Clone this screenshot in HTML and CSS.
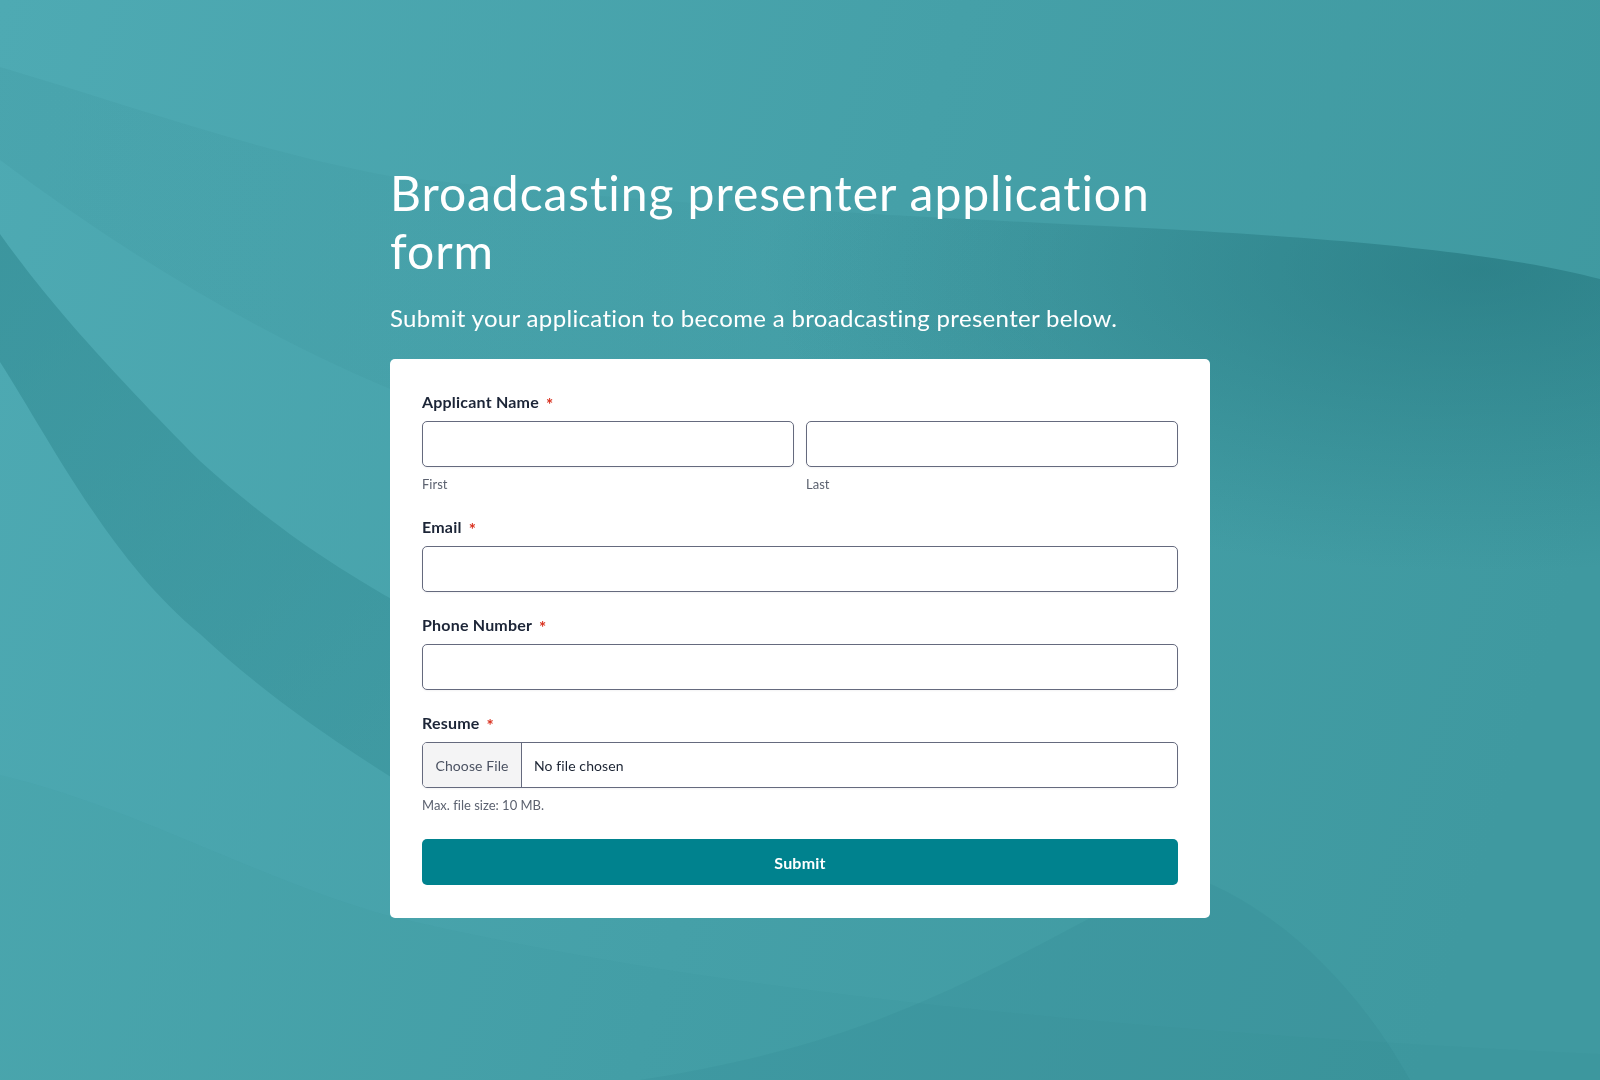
FILE: index.html
```html
<!DOCTYPE html>
<html lang="en">
<head>
<meta charset="utf-8">
<title>Broadcasting presenter application form</title>
<link rel="stylesheet" href="styles.css">
</head>
<body>
<svg class="bg" viewBox="0 0 1600 1080" preserveAspectRatio="none" aria-hidden="true">
  <defs>
    <linearGradient id="g0" x1="0" y1="0" x2="1600" y2="500" gradientUnits="userSpaceOnUse">
      <stop offset="0" stop-color="#4eaab3"/>
      <stop offset="0.55" stop-color="#45a0a8"/>
      <stop offset="1" stop-color="#3f99a0"/>
    </linearGradient>
    <linearGradient id="gAh" x1="0" y1="0" x2="1100" y2="0" gradientUnits="userSpaceOnUse">
      <stop offset="0" stop-color="#1b6a72" stop-opacity="0.08"/>
      <stop offset="0.6" stop-color="#1b6a72" stop-opacity="0.05"/>
      <stop offset="1" stop-color="#1b6a72" stop-opacity="0"/>
    </linearGradient>
    <radialGradient id="gA" cx="1480" cy="270" r="720" gradientUnits="userSpaceOnUse" gradientTransform="translate(1480 270) scale(1 0.42) translate(-1480 -270)">
      <stop offset="0" stop-color="#1b6a72" stop-opacity="0.5"/>
      <stop offset="1" stop-color="#1b6a72" stop-opacity="0"/>
    </radialGradient>
    <linearGradient id="gB" x1="0" y1="250" x2="400" y2="780" gradientUnits="userSpaceOnUse">
      <stop offset="0" stop-color="#2b838b" stop-opacity="0.5"/>
      <stop offset="1" stop-color="#2b838b" stop-opacity="0.3"/>
    </linearGradient>
  </defs>
  <rect x="0" y="0" width="1600" height="1080" fill="url(#g0)"/>
  <path d="M0,67 C130,105 250,150 390,176 C650,205 950,218 1200,231 C1400,243 1520,258 1600,279 L1600,820 C1200,700 800,560 390,389 C250,330 120,250 0,160 Z" fill="url(#gAh)"/>
  <path d="M0,67 C130,105 250,150 390,176 C650,205 950,218 1200,231 C1400,243 1520,258 1600,279 L1600,820 C1200,700 800,560 390,389 C250,330 120,250 0,160 Z" fill="url(#gA)"/>
  <path d="M0,234 C40,290 90,350 200,461 C260,515 320,560 420,615 L420,795 C330,740 260,690 200,634 C110,560 50,440 0,362 Z" fill="url(#gB)"/>
  <path d="M0,775 C130,805 260,880 390,916 C700,990 1100,1030 1600,1054 L1600,1080 L0,1080 Z" fill="#1b6a72" fill-opacity="0.035"/>
  <path d="M1180,872 C1280,905 1360,990 1410,1080 L640,1080 C900,1040 1000,960 1180,872 Z" fill="#1b6a72" fill-opacity="0.08"/>
</svg>

<main class="page">
  <h1 class="title">Broadcasting presenter application form</h1>
  <p class="subtitle">Submit your application to become a broadcasting presenter below.</p>

  <form class="card">
    <div class="field">
      <div class="label">Applicant Name <span class="req">*</span></div>
      <div class="name-row">
        <div class="name-col">
          <input class="input" type="text" aria-label="First">
          <div class="sub">First</div>
        </div>
        <div class="name-col">
          <input class="input" type="text" aria-label="Last">
          <div class="sub">Last</div>
        </div>
      </div>
    </div>

    <div class="field">
      <div class="label">Email <span class="req">*</span></div>
      <input class="input" type="text" aria-label="Email">
    </div>

    <div class="field">
      <div class="label">Phone Number <span class="req">*</span></div>
      <input class="input" type="text" aria-label="Phone Number">
    </div>

    <div class="field">
      <div class="label">Resume <span class="req">*</span></div>
      <div class="file">
        <span class="file-btn">Choose File</span>
        <span class="file-name">No file chosen</span>
      </div>
      <div class="sub">Max. file size: 10 MB.</div>
    </div>

    <button class="submit" type="button">Submit</button>
  </form>
</main>
</body>
</html>
```

FILE: styles.css
```css
* {
  box-sizing: border-box;
}

html, body {
  margin: 0;
  padding: 0;
  height: 100%;
}

body {
  font-family: Lato, "Open Sans", "Liberation Sans", sans-serif;
  font-variant-ligatures: none;
  font-feature-settings: "liga" 0, "clig" 0;
  background: #45a0a8;
  overflow: hidden;
}

.bg {
  position: fixed;
  left: 0;
  top: 0;
  width: 100%;
  height: 100%;
  z-index: 0;
  display: block;
}

.page {
  position: relative;
  z-index: 1;
  width: 820px;
  margin: 0 auto;
  padding-top: 164px;
}

.title {
  margin: 0;
  color: #ffffff;
  font-size: 48px;
  line-height: 58px;
  font-weight: 400;
  letter-spacing: 0.95px;
}

.subtitle {
  margin: 22px 0 0;
  color: #ffffff;
  font-size: 24px;
  line-height: 32px;
  font-weight: 400;
  letter-spacing: 0.33px;
}

.card {
  margin-top: 25px;
  background: #ffffff;
  border-radius: 5px;
  padding: 32px 32px 33px;
  display: flex;
  flex-direction: column;
  gap: 22px;
}

.field {
  display: flex;
  flex-direction: column;
}

.label {
  font-size: 16px;
  line-height: 22px;
  font-weight: 700;
  color: #1c2537;
  margin-bottom: 8px;
  letter-spacing: 0.2px;
}

.req {
  color: #d9301e;
  font-size: 17px;
  font-weight: 700;
  margin-left: 3px;
  position: relative;
  top: 3px;
}

.name-row {
  display: grid;
  grid-template-columns: 1fr 1fr;
  gap: 12px;
}

.name-col {
  display: flex;
  flex-direction: column;
}

.input {
  display: block;
  width: 100%;
  height: 46px;
  border: 1px solid #656a7e;
  border-radius: 5px;
  background: #ffffff;
  box-shadow: 0 1px 2px rgba(16, 24, 40, 0.05);
  font-family: inherit;
  font-size: 16px;
  padding: 0 12px;
  outline: none;
}

.sub {
  margin-top: 7px;
  font-size: 13px;
  line-height: 20px;
  color: #5c6270;
}

.file {
  display: flex;
  height: 46px;
  border: 1px solid #656a7e;
  border-radius: 5px;
  overflow: hidden;
  box-shadow: 0 1px 2px rgba(16, 24, 40, 0.05);
}

.file-btn {
  display: flex;
  align-items: center;
  width: 99px;
  justify-content: center;
  background: #f4f4f5;
  border-right: 1px solid #656a7e;
  font-size: 14px;
  color: #4b5262;
  letter-spacing: 0.1px;
}

.file-name {
  display: flex;
  align-items: center;
  padding-left: 12px;
  font-size: 14px;
  color: #1c2433;
  letter-spacing: 0.1px;
}

.submit {
  margin-top: 2px;
  height: 46px;
  border: none;
  border-radius: 5px;
  background: #00828e;
  color: #ffffff;
  font-family: inherit;
  font-size: 16px;
  font-weight: 700;
  letter-spacing: 0.2px;
  cursor: pointer;
}
```
